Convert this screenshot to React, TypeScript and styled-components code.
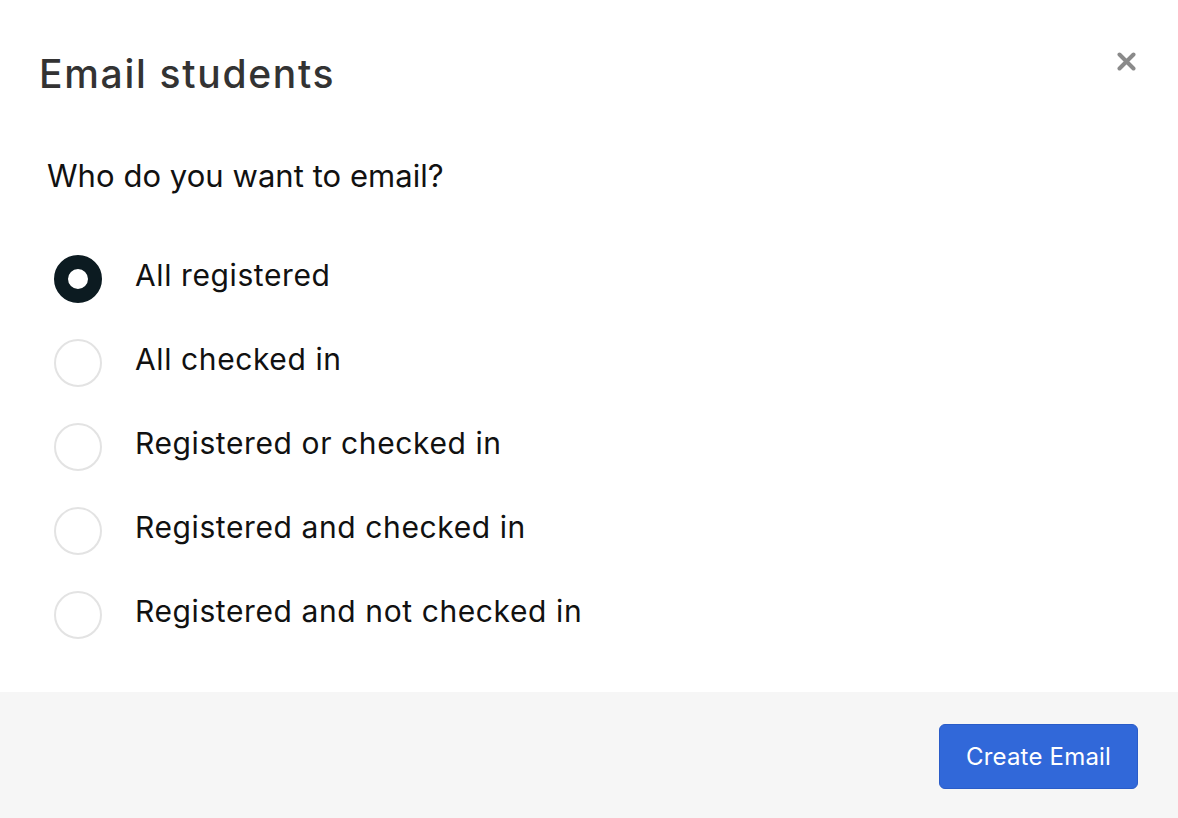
import React, { useState } from "react";
import styled, { createGlobalStyle } from "styled-components";

const GlobalStyle = createGlobalStyle`
  html, body {
    margin: 0;
    padding: 0;
    background: #ffffff;
  }
  body {
    font-family: Inter, "Liberation Sans", Arial, sans-serif;
    -webkit-font-smoothing: antialiased;
  }
  * { box-sizing: border-box; }
`;

const Dialog = styled.div`
  width: 1178px;
  height: 818px;
  display: flex;
  flex-direction: column;
  background: #ffffff;
`;

const Body = styled.div`
  flex: 1;
  display: flex;
  flex-direction: column;
`;

const Header = styled.div`
  display: flex;
  justify-content: space-between;
  align-items: flex-start;
  padding: 54px 42px 0 39px;
`;

const Title = styled.h1`
  margin: 0;
  font-size: 39px;
  line-height: 1;
  font-weight: 500;
  letter-spacing: 1.7px;
  color: #333333;
`;

const CloseButton = styled.button`
  width: 19px;
  height: 19px;
  margin-top: -2px;
  padding: 0;
  border: none;
  background: transparent;
  cursor: pointer;
  display: flex;
`;

const Content = styled.div`
  padding: 67px 0 0 47px;
  display: flex;
  flex-direction: column;
`;

const Question = styled.p`
  margin: 0;
  font-size: 31px;
  line-height: 1;
  letter-spacing: 0.05px;
  color: #111111;
`;

const Options = styled.div`
  display: flex;
  flex-direction: column;
  gap: 36px;
  margin-top: 64px;
  margin-left: 7px;
`;

const Option = styled.label`
  display: flex;
  align-items: center;
  gap: 33px;
  cursor: pointer;
`;

const Radio = styled.span<{ $checked: boolean }>`
  width: 48px;
  height: 48px;
  border-radius: 50%;
  flex: none;
  background: #ffffff;
  border: ${(p) => (p.$checked ? "14px solid #0c1b21" : "2px solid #e3e3e3")};
`;

const OptionText = styled.span`
  font-size: 30px;
  line-height: 1;
  padding-bottom: 8px;
  letter-spacing: 0.6px;
  color: #111111;
`;

const Footer = styled.div`
  height: 126px;
  background: #f6f6f6;
  display: flex;
  justify-content: flex-end;
  align-items: flex-start;
  padding: 32px 40px 0 0;
`;

const PrimaryButton = styled.button`
  width: 199px;
  height: 65px;
  border-radius: 6px;
  border: 1px solid #2a5cc8;
  background: #3168d9;
  color: #ffffff;
  font-family: Inter, "Liberation Sans", Arial, sans-serif;
  font-size: 24px;
  letter-spacing: 0.2px;
  cursor: pointer;
`;

const options = [
  "All registered",
  "All checked in",
  "Registered or checked in",
  "Registered and checked in",
  "Registered and not checked in",
];

export default function App() {
  const [selected, setSelected] = useState(0);
  return (
    <>
      <GlobalStyle />
      <Dialog>
        <Body>
          <Header>
            <Title>Email students</Title>
            <CloseButton aria-label="Close">
              <svg width="19" height="19" viewBox="0 0 19 19">
                <path
                  d="M2.5 2.5 L16.5 16.5 M16.5 2.5 L2.5 16.5"
                  stroke="#8a8a8a"
                  strokeWidth="4"
                  strokeLinecap="round"
                />
              </svg>
            </CloseButton>
          </Header>
          <Content>
            <Question>Who do you want to email?</Question>
            <Options>
              {options.map((label, i) => (
                <Option key={label} onClick={() => setSelected(i)}>
                  <Radio $checked={selected === i} />
                  <OptionText>{label}</OptionText>
                </Option>
              ))}
            </Options>
          </Content>
        </Body>
        <Footer>
          <PrimaryButton>Create Email</PrimaryButton>
        </Footer>
      </Dialog>
    </>
  );
}
